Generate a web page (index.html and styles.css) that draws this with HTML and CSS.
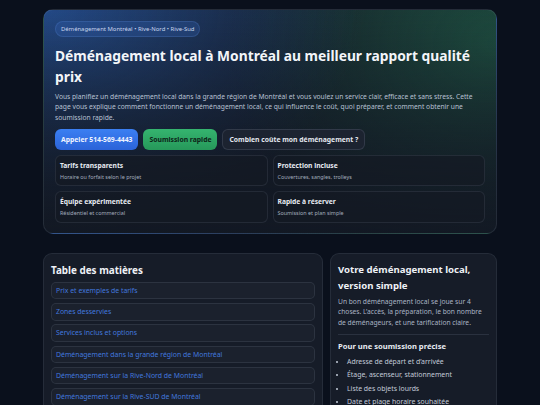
FILE: index.html
```html
<!DOCTYPE html>
<html lang="fr">
<head>
<meta charset="utf-8">
<title>Déménagement local à Montréal</title>
<link rel="stylesheet" href="styles.css">
</head>
<body>
<main class="page">
  <section class="hero">
    <div class="pill">Déménagement Montréal • Rive-Nord • Rive-Sud</div>
    <h1 class="hero-title">Déménagement local à Montréal au meilleur rapport qualité prix</h1>
    <p class="hero-text">Vous planifiez un déménagement local dans la grande région de Montréal et vous voulez un service clair, efficace et sans stress. Cette page vous explique comment fonctionne un déménagement local, ce qui influence le coût, quoi préparer, et comment obtenir une soumission rapide.</p>
    <div class="actions">
      <a class="btn btn-blue" href="#">Appeler 514-569-4443</a>
      <a class="btn btn-green" href="#">Soumission rapide</a>
      <a class="btn btn-dark" href="#">Combien coûte mon déménagement ?</a>
    </div>
    <div class="features">
      <div class="feature"><div class="feature-title">Tarifs transparents</div><div class="feature-sub">Horaire ou forfait selon le projet</div></div>
      <div class="feature"><div class="feature-title">Protection incluse</div><div class="feature-sub">Couvertures, sangles, trolleys</div></div>
      <div class="feature"><div class="feature-title">Équipe expérimentée</div><div class="feature-sub">Résidentiel et commercial</div></div>
      <div class="feature"><div class="feature-title">Rapide à réserver</div><div class="feature-sub">Soumission et plan simple</div></div>
    </div>
  </section>

  <div class="columns">
    <nav class="card toc">
      <h2 class="toc-title">Table des matières</h2>
      <ul class="toc-list">
        <li><a href="#">Prix et exemples de tarifs</a></li>
        <li><a href="#">Zones desservies</a></li>
        <li><a href="#">Services inclus et options</a></li>
        <li><a href="#">Déménagement dans la grande région de Montréal</a></li>
        <li><a href="#">Déménagement sur la Rive-Nord de Montréal</a></li>
        <li><a href="#">Déménagement sur la Rive-SUD de Montréal</a></li>
      </ul>
    </nav>
    <aside class="card side">
      <h2 class="side-title">Votre déménagement local, version simple</h2>
      <p class="side-text">Un bon déménagement local se joue sur 4 choses. L’accès, la préparation, le bon nombre de déménageurs, et une tarification claire.</p>
      <hr class="divider">
      <h3 class="side-sub">Pour une soumission précise</h3>
      <ul class="side-list">
        <li>Adresse de départ et d’arrivée</li>
        <li>Étage, ascenseur, stationnement</li>
        <li>Liste des objets lourds</li>
        <li>Date et plage horaire souhaitée</li>
      </ul>
    </aside>
  </div>
</main>
</body>
</html>
```

FILE: styles.css
```css
* { box-sizing: border-box; }
html, body { margin: 0; padding: 0; }
body {
  background: #0a101c;
  color: #e5e9f0;
  font-family: "Noto Sans", "Open Sans", sans-serif;
  height: 405px;
  overflow: hidden;
}
.page {
  width: 454px;
  margin: 0 auto;
  padding-top: 9px;
}
.hero {
  border-radius: 10px;
  border: 1px solid rgba(148, 163, 184, 0.14);
  padding: 11px 11px 10px;
  background:
    linear-gradient(180deg, rgba(18, 24, 35, 0) 0%, rgba(18, 24, 35, 0.5) 55%, rgba(18, 24, 35, 0.9) 100%),
    radial-gradient(ellipse 70% 100% at 0% 0%, rgba(36, 76, 140, 0.95), rgba(36, 76, 140, 0) 100%),
    radial-gradient(ellipse 60% 100% at 100% 15%, rgba(32, 92, 70, 0.75), rgba(32, 92, 70, 0) 100%),
    #141b27;
}
.pill {
  width: max-content;
  font-size: 5.9px;
  line-height: 14px;
  padding: 0 5px;
  border-radius: 999px;
  color: #c9d6ee;
  background: rgba(50, 96, 180, 0.3);
  border: 1px solid rgba(100, 150, 230, 0.2);
}
.hero-title {
  margin: 7.5px 0 0;
  font-size: 13.8px;
  line-height: 21px;
  font-weight: 700;
  color: #f3f5f9;
}
.hero-text {
  margin: 5px 0 0;
  font-size: 6.7px;
  line-height: 10.6px;
  color: #b7c1d3;
}
.actions {
  display: flex;
  gap: 5px;
  margin-top: 5.5px;
}
.btn {
  display: inline-block;
  height: 21px;
  line-height: 21px;
  padding: 0 6px;
  border-radius: 6px;
  font-size: 6.8px;
  font-weight: 700;
  text-decoration: none;
}
.btn-blue { background: linear-gradient(180deg, #3b7ff2, #2b63d8); color: #eef3ff; }
.btn-green { background: linear-gradient(180deg, #35b46f, #26985a); color: #0d2318; }
.btn-dark {
  background: #1c2330;
  color: #e3e7ee;
  border: 1px solid rgba(148, 163, 184, 0.18);
  line-height: 19px;
}
.features {
  display: grid;
  grid-template-columns: 1fr 1fr;
  grid-auto-rows: 31.5px;
  gap: 5px;
  margin-top: 5px;
}
.feature {
  border: 1px solid rgba(148, 163, 184, 0.13);
  background: rgba(20, 26, 36, 0.7);
  border-radius: 6px;
  padding: 5px 4px 0;
}
.feature-title {
  font-size: 6.7px;
  font-weight: 700;
  line-height: 10px;
  color: #e7ebf2;
}
.feature-sub {
  margin-top: 1px;
  font-size: 5.4px;
  line-height: 10px;
  color: #a3adbd;
}
.columns {
  display: grid;
  grid-template-columns: 280px 1fr;
  gap: 7px;
  margin-top: 19px;
  align-items: start;
}
.card {
  background: #161c28;
  border: 1px solid rgba(148, 163, 184, 0.12);
  border-radius: 9px;
  padding: 8px 7px 8px;
  min-height: 170px;
}
.toc-title {
  margin: 0 0 4px;
  font-size: 9.9px;
  line-height: 16px;
  font-weight: 700;
  color: #eef1f6;
}
.toc-list {
  list-style: none;
  margin: 0;
  padding: 0;
  display: flex;
  flex-direction: column;
  gap: 3.8px;
}
.toc-list a {
  display: block;
  height: 17.5px;
  line-height: 15.5px;
  padding: 0 4px;
  font-size: 6.9px;
  color: #4278de;
  text-decoration: none;
  background: rgba(255, 255, 255, 0.025);
  border: 1px solid rgba(148, 163, 184, 0.14);
  border-radius: 5px;
}
.side-title {
  margin: 0;
  font-size: 9.6px;
  line-height: 16px;
  font-weight: 700;
  color: #eef1f6;
}
.side-text {
  margin: 3px 0 0;
  font-size: 6.7px;
  line-height: 10.7px;
  color: #aab4c4;
}
.divider {
  border: 0;
  border-top: 1px solid rgba(148, 163, 184, 0.16);
  margin: 5px 0 0;
}
.side-sub {
  margin: 5px 0 0;
  font-size: 7.6px;
  line-height: 12px;
  font-weight: 700;
  color: #e7ebf2;
}
.side-list {
  margin: 3.5px 0 0;
  padding-left: 9px;
  font-size: 6.9px;
  line-height: 13.1px;
  color: #c3cbd8;
}
```
